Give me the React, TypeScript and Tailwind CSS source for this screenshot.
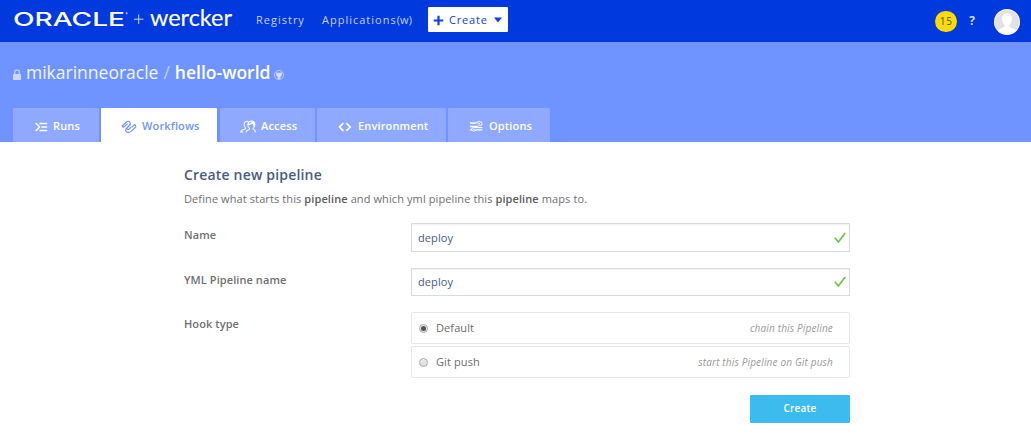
import type { ReactNode } from 'react';

function RunsIcon() {
  return (
    <svg width="13" height="12" viewBox="0 0 13 12" fill="none" stroke="currentColor" strokeWidth="1.4" className="shrink-0">
      <path d="M.8 2 L4.6 6 L.8 10" />
      <path d="M4.5 2.5 H12.2 M6.4 6 H12.2 M4.5 9.5 H12.2" />
    </svg>
  );
}

function WorkflowsIcon() {
  return (
    <svg width="16" height="14" viewBox="0 0 16 14" fill="none" stroke="currentColor" strokeWidth="1.1" strokeLinecap="round" className="shrink-0">
      <path d="M1.2 6 L5.5 2 Q7.2 .6 8.7 2 Q10 3.4 8.6 5 L6.4 7.6 Q5.6 8.8 6.6 9.4 Q7.4 9.8 8.2 9 L9.8 7.4" />
      <path d="M2.6 7.2 L6.2 4 M14.8 7 L10.2 11.4 Q8.4 12.9 6.2 12.2 Q4 11 5 8.9 L9.2 4.8 M10.8 7 L14 4.4" />
      <circle cx="1.7" cy="6.6" r=".9" fill="currentColor" stroke="none" />
      <circle cx="14.3" cy="5.6" r=".9" fill="currentColor" stroke="none" />
    </svg>
  );
}

function AccessIcon() {
  return (
    <svg width="16" height="13" viewBox="0 0 16 13" fill="none" stroke="currentColor" strokeWidth="1.05" strokeLinecap="round" className="shrink-0">
      <path d="M5.6 8 Q3.6 6 4.2 3.4 Q5.2 .8 8 1.4 M5.6 8 Q5.6 9.6 3 9.8 Q.8 10.2 .7 12 H3" />
      <path d="M9.6 8.6 Q7.6 7.2 7.8 4.4 Q8.2 1 11.4 1 Q14.8 1.2 14.8 4.6 Q14.6 7.4 13 8.8 M13 8.8 Q15.4 9.8 15.3 12 M9.6 8.6 Q9.4 9.8 7.6 10.2 Q6.2 10.8 6.2 12" />
      <path d="M8.6 4.4 Q11 4.4 12 2.6 Q13 4 14.4 4.4 M13.4 2.2 L14.2 6" strokeWidth="1.4" />
    </svg>
  );
}

function CodeIcon() {
  return (
    <svg width="14" height="10" viewBox="0 0 14 10" fill="none" stroke="currentColor" strokeWidth="1.7" className="shrink-0">
      <path d="M5.4 1.2 L1.5 5 L5.4 8.8 M8.3 1.2 L12.2 5 L8.3 8.8" />
    </svg>
  );
}

function OptionsIcon() {
  return (
    <svg width="13" height="11" viewBox="0 0 13 11" fill="none" stroke="currentColor" strokeWidth="1" className="shrink-0">
      <path d="M0 2 H5.6 M0 5.5 H8 M6.4 8.8 H12.4 M0 8.8 H1.6" strokeWidth="1.3" />
      <path d="M5.6 3 Q5.8 .8 8 .8 H10 Q12 .8 12 2.8 Q12 4.8 10 4.8 H8.4 M7.4 2.8 H10" />
      <path d="M6.4 8 Q6.4 10 4.4 10 H3.4 Q1.6 10 1.6 8.2 Q1.6 6.6 3.4 6.6 H12.4 M3.4 8.3 H5" />
    </svg>
  );
}

function Tab({ className, active, children }: { className: string; active?: boolean; children: ReactNode }) {
  return (
    <a
      className={`flex h-[34px] items-center rounded-t-[1px] pt-[3px] text-[11px] font-semibold tracking-[0.15px] ${
        active ? 'bg-white text-[#6e94fe]' : 'bg-[#8ea9ff] text-white'
      } ${className}`}
    >
      {children}
    </a>
  );
}

function Check() {
  return (
    <svg width="12" height="12" viewBox="0 0 12 12" fill="none" stroke="#6cc04a" strokeWidth="1.6" className="mb-px shrink-0">
      <path d="M.8 5.8 L4.4 10 L11.2 1" />
    </svg>
  );
}

function Field({ className }: { className: string }) {
  return (
    <div className={`flex w-[439px] items-center justify-between border border-[#d5dddd] pr-[3px] pl-[6px] text-[11px] tracking-[0.1px] text-[#4a5c7e] shadow-[inset_0_1px_2px_rgba(0,0,0,0.06)] ${className}`}>
      <span>deploy</span>
      <Check />
    </div>
  );
}

function Radio({ checked }: { checked?: boolean }) {
  return (
    <span className="flex size-[9px] shrink-0 items-center justify-center rounded-full border border-[#aaa] bg-linear-to-b from-[#eee] to-[#ddd]">
      {checked && <span className="size-[5px] rounded-full bg-[#555]" />}
    </span>
  );
}

function Choice({ label, hint, checked }: { label: string; hint: string; checked?: boolean }) {
  return (
    <label className="flex h-8 w-[439px] items-center rounded-[2px] border border-[#e7e9e9] pr-4 pl-[7px] text-[11px] text-[#6c6c6c]">
      <Radio checked={checked} />
      <span className="ml-2 tracking-[0.1px]">{label}</span>
      <span className="ml-auto text-[10px] tracking-[0.16px] text-[#9a9a9a] italic">{hint}</span>
    </label>
  );
}

export default function App() {
  return (
    <div className="h-[438px] w-[1031px] overflow-hidden bg-white font-['Open_Sans',sans-serif] text-[#707070]">
      <header className="flex h-[42px] items-start bg-[#0039dd] text-white">
        <svg width="226" height="42" className="ml-3 shrink-0" fill="#fff">
          <text x="1" y="26" fontSize="19.3" fontWeight="500" textLength="112" lengthAdjust="spacingAndGlyphs" fontFamily="Inter, sans-serif">ORACLE</text>
          <circle cx="114.6" cy="13.2" r="1" opacity=".7" />
          <path d="M122 19.2 h9.5 M126.7 14.5 v9.5" stroke="#c9d5fa" strokeWidth="1" />
          <text x="138" y="25.8" fontSize="23.4" textLength="82" lengthAdjust="spacingAndGlyphs" fontFamily="Lato, sans-serif" stroke="#fff" strokeWidth=".15">wercker</text>
        </svg>
        <nav className="ml-[18px] flex h-10 items-center text-[11px] text-[#c4d2fb]">
          <a className="w-[66px] tracking-[1px]">Registry</a>
          <a className="w-[106px] tracking-[1px]">Applications<span className="tracking-[0.2px]">(w)</span></a>
        </nav>
        <button className="mt-[7px] flex h-[25px] w-[80px] items-center rounded-[1px] bg-white pt-px pl-[5px] text-[11px] tracking-[0.8px] text-[#0e42dc]">
          <svg width="11" height="11" viewBox="0 0 11 11" fill="none" stroke="currentColor" strokeWidth="2.2">
            <path d="M0.7 5.5 H10.3 M5.5 .7 V10.3" />
          </svg>
          <span className="ml-[5px]">Create</span>
          <svg width="8" height="6" viewBox="0 0 8 6" fill="currentColor" className="mb-px ml-[6px]">
            <path d="M0 .5 H8 L4 5.5 Z" />
          </svg>
        </button>
        <div className="ml-auto flex items-start pr-[11px]">
          <span className="mt-[11px] flex h-[21px] w-[22px] items-center justify-center rounded-full bg-[#ffdc00] text-[10px] tracking-[0.7px] text-[#4c4a3d]">15</span>
          <span className="mt-3 ml-3 text-xs leading-[18px] font-bold text-[#d3defd]">?</span>
          <svg width="26" height="26" viewBox="0 0 26 26" className="mt-[9px] ml-[19px]">
            <defs>
              <clipPath id="face"><circle cx="13" cy="13" r="12" /></clipPath>
            </defs>
            <circle cx="13" cy="13" r="13" fill="#fff" />
            <g clipPath="url(#face)">
              <rect width="26" height="26" fill="#e2e2e2" />
              <path d="M13 4.5 C9.8 4.5 7.7 6.7 8 10.2 C8.2 13 9.2 14.7 10.4 15.8 V18 C8.5 19.2 5 19.4 3.8 22 L3.8 27 H22.2 V22 C21 19.4 17.5 19.2 15.6 18 V15.8 C16.8 14.7 17.8 13 18 10.2 C18.3 6.7 16.2 4.5 13 4.5 Z" fill="#fff" />
            </g>
          </svg>
        </div>
      </header>

      <section className="flex h-[100px] flex-col justify-between bg-[#7094ff]">
        <h1 className="mt-[17px] ml-[13px] flex h-[26px] items-center text-[17.5px] text-[#f1f5ff]">
          <svg width="8" height="11" viewBox="0 0 8 11" className="mt-[5px] mr-[5px] text-[#cbd8ff]">
            <path d="M1.7 5 V3.2 Q1.7 1 4 1 Q6.3 1 6.3 3.2 V5" fill="none" stroke="currentColor" strokeWidth="1.2" />
            <rect y="5" width="8" height="6" rx=".6" fill="currentColor" />
          </svg>
          <span>mikarinneoracle</span>
          <span className="mx-[5px] text-[#c0d0ff]">/</span>
          <span className="font-semibold text-white">hello-world</span>
          <svg width="10" height="10" viewBox="0 0 10 10" className="mt-[5px] ml-1">
            <circle cx="5" cy="5" r="4.5" fill="none" stroke="#c5d3ff" strokeWidth=".9" />
            <path d="M2.2 2.2 L3.6 2.8 H6.4 L7.8 2.2 V5 Q7.6 6.6 6.3 6.8 V9 H3.7 V6.8 Q2.4 6.6 2.2 5 Z" fill="#d8e2ff" />
          </svg>
        </h1>
        <nav className="ml-[13px] flex">
          <Tab className="mr-[2px] w-[86px] pl-[22px]"><RunsIcon /><span className="ml-[5px]">Runs</span></Tab>
          <Tab active className="mr-[3px] w-[116px] pl-[20px]"><WorkflowsIcon /><span className="ml-[5px]">Workflows</span></Tab>
          <Tab className="mr-[2px] w-[95px] pl-[20px]"><AccessIcon /><span className="ml-[5px]">Access</span></Tab>
          <Tab className="mr-[2px] w-[129px] pl-[21px]"><CodeIcon /><span className="ml-[6px]">Environment</span></Tab>
          <Tab className="w-[102px] pl-[22px]"><OptionsIcon /><span className="ml-[6px]">Options</span></Tab>
        </nav>
      </section>

      <main className="ml-[184px] w-[666px] pt-[23px]">
        <h2 className="text-sm leading-5 font-semibold tracking-[0.18px] text-[#4a5c7e]">Create new pipeline</h2>
        <p className="mt-[6px] text-[11px] leading-4 tracking-[0.1px]">
          Define what starts this <b className="font-semibold text-[#5c5c5c]">pipeline</b> and which yml pipeline this <b className="font-semibold text-[#5c5c5c]">pipeline</b> maps to.
        </p>
        <div className="mt-4 flex justify-between text-[11px] font-semibold tracking-[0.08px]">
          <span className="mt-[4px] leading-4">Name</span>
          <Field className="h-[29px] pt-px font-normal" />
        </div>
        <div className="mt-4 flex justify-between text-[11px] font-semibold tracking-[0.08px]">
          <span className="mt-[4px] leading-4">YML Pipeline name</span>
          <Field className="h-7 font-normal" />
        </div>
        <div className="mt-4 flex justify-between">
          <span className="mt-[4px] text-[11px] leading-4 font-semibold tracking-[0.08px]">Hook type</span>
          <div className="flex flex-col gap-[2px]">
            <Choice label="Default" hint="chain this Pipeline" checked />
            <Choice label="Git push" hint="start this Pipeline on Git push" />
          </div>
        </div>
        <button className="mt-[17px] ml-auto flex h-7 w-[100px] items-center justify-center rounded-[1px] bg-[#3cbbee] pb-px text-[10px] font-semibold tracking-[0.15px] text-white">Create</button>
      </main>
    </div>
  );
}
